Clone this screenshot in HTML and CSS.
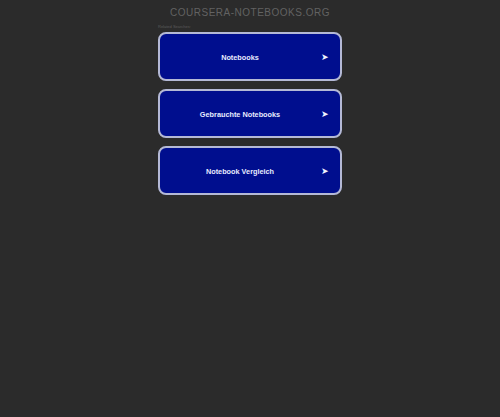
FILE: index.html
```html
<!DOCTYPE html>
<html>
<head>
<meta charset="utf-8">
<link rel="stylesheet" href="styles.css">
</head>
<body>
<div class="page">
  <div class="domain">COURSERA-NOTEBOOKS.ORG</div>
  <div class="col">
    <div class="related">Related Searches:</div>
    <div class="list">
      <a class="btn" href="#"><span class="label">Notebooks</span><span class="arrow">➤</span></a>
      <a class="btn" href="#"><span class="label">Gebrauchte Notebooks</span><span class="arrow">➤</span></a>
      <a class="btn" href="#"><span class="label">Notebook Vergleich</span><span class="arrow">➤</span></a>
    </div>
  </div>
</div>
</body>
</html>
```
FILE: styles.css
```css
html, body {
  margin: 0;
  padding: 0;
  background: #2b2b2b;
  font-family: "Liberation Sans", Arial, sans-serif;
}
.page {
  width: 500px;
  height: 417px;
  display: flex;
  flex-direction: column;
  align-items: center;
}
.domain {
  margin-top: 6px;
  height: 13px;
  font-size: 10px;
  line-height: 13px;
  letter-spacing: 0.5px;
  color: #626262;
}
.col {
  width: 184px;
  display: flex;
  flex-direction: column;
}
.related {
  font-size: 4px;
  line-height: 6px;
  height: 6px;
  margin-top: 5px;
  color: #5c5c5c;
}
.list {
  margin-top: 2px;
  display: flex;
  flex-direction: column;
  gap: 8px;
}
.btn {
  box-sizing: border-box;
  height: 49px;
  border: 2px solid #b4b9d6;
  border-radius: 8px;
  background: #000e8e;
  display: flex;
  align-items: center;
  position: relative;
  text-decoration: none;
  color: #e8ecff;
  padding-right: 20px;
  padding-top: 2px;
}
.label {
  flex: 1;
  text-align: center;
  font-size: 7.3px;
  font-weight: bold;
  color: #e8ecff;
}
.arrow {
  position: absolute;
  right: 11px;
  top: 50%;
  transform: translateY(-50%);
  font-size: 9px;
  color: #f0f2ff;
}
```
